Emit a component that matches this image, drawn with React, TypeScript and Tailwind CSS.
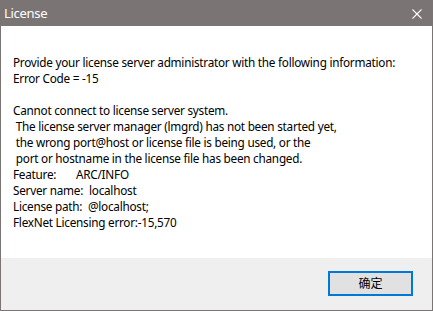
export default function App() {
  const lines: string[] = [
    "Provide your license server administrator with the following information:",
    "Error Code = -15",
    "\u00a0",
    "Cannot connect to license server system.",
    "\u00a0The license server manager (lmgrd) has not been started yet,",
    "\u00a0the wrong port@host or license file is being used, or the",
    "\u00a0port or hostname in the license file has been changed.",
  ];
  return (
    <div
      className="w-[433px] h-[311px] border border-[#7a7574] flex flex-col bg-white"
      style={{ fontFamily: '"Noto Sans", "Noto Sans CJK SC", sans-serif' }}
    >
      <div className="h-[25px] bg-[#7a7574] flex items-center justify-between pl-[3px] pr-[10px] shrink-0">
        <span className="text-white text-[13px] tracking-[-0.3px] leading-none">License</span>
        <svg width="10" height="10" viewBox="0 0 10 10">
          <path d="M0.5 0.5 L9.5 9.5 M9.5 0.5 L0.5 9.5" stroke="white" strokeWidth="1.1" fill="none" />
        </svg>
      </div>
      <div className="flex-1 bg-white pt-[28px] pl-[12px] text-[11.75px] tracking-[-0.25px] leading-[16px] text-black">
        {lines.map((l, i) => (
          <div key={i} className="whitespace-pre">{l}</div>
        ))}
        <div className="flex"><span className="w-[63px] shrink-0">Feature:</span><span>ARC/INFO</span></div>
        <div className="flex"><span className="w-[76px] shrink-0">Server name:</span><span>localhost</span></div>
        <div className="flex"><span className="w-[75px] shrink-0">License path:</span><span>@localhost;</span></div>
        <div>FlexNet Licensing error:-15,570</div>
      </div>
      <div className="h-[52px] bg-[#efefef] shrink-0 flex justify-end pt-[13px] pr-[19px]">
        <button className="w-[85px] h-[25px] border-2 border-[#0078d7] bg-[#e1e1e1] text-[12px] text-black leading-none">
          确定
        </button>
      </div>
    </div>
  );
}
